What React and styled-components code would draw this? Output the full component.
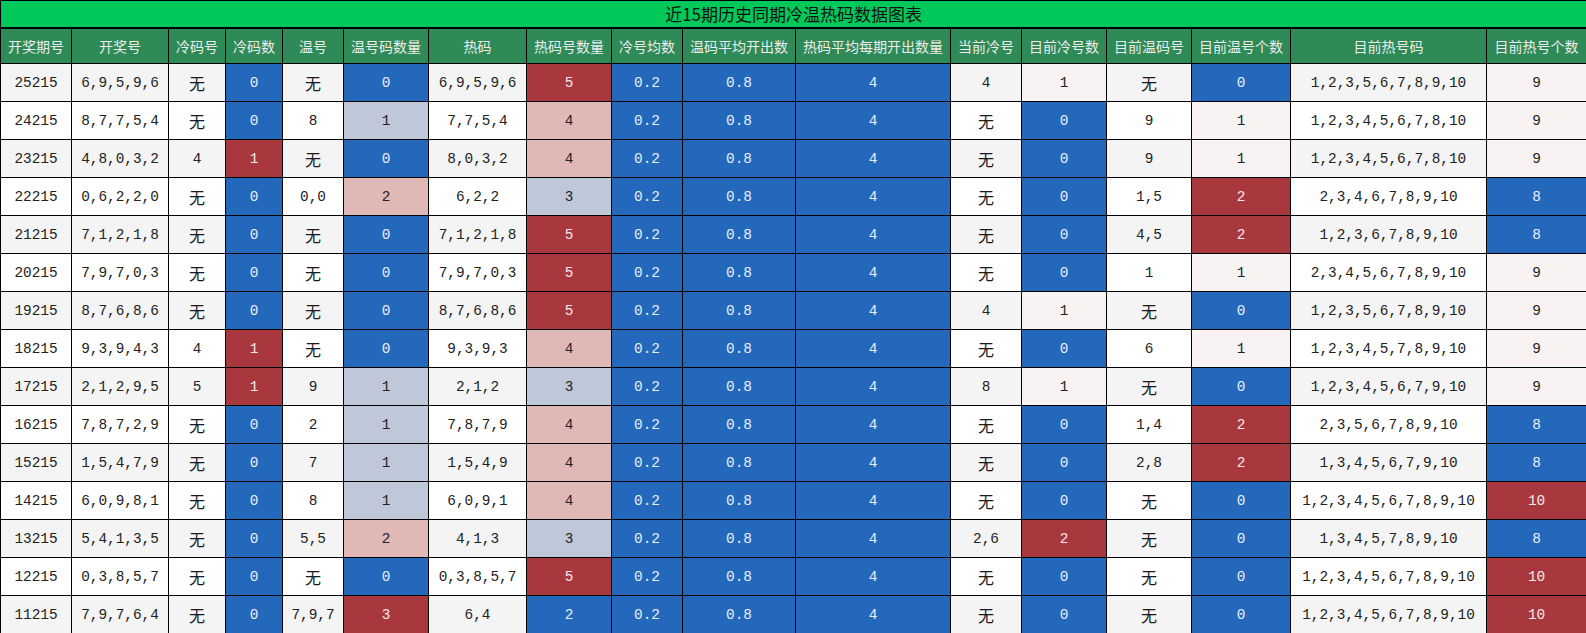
import React from "react";
import styled, { createGlobalStyle } from "styled-components";

const Global = createGlobalStyle`
  html, body { margin: 0; padding: 0; background: #ffffff; }
  body { font-family: "Noto Sans CJK SC", "Noto Sans", sans-serif; }
`;

const COLORS = {
  blue: { bg: "#2468bc", fg: "#e8eefa" },
  red: { bg: "#a8383e", fg: "#f6e8e8" },
  pink: { bg: "#e0b8b6", fg: "#222222" },
  slate: { bg: "#bfc8d8", fg: "#222222" },
  blush: { bg: "#f8f2f2", fg: "#222222" },
};

const Sheet = styled.table`
  width: 1586px;
  table-layout: fixed;
  border-collapse: collapse;
  border: 1px solid #000;
`;

const Col = styled.col`
  width: ${(p) => p.$w}px;
`;

const TitleCell = styled.th`
  height: 26px;
  padding: 0;
  background: #00c85a;
  color: #111111;
  font-family: "Noto Sans CJK SC", "Noto Sans", sans-serif;
  font-size: 17px;
  font-weight: 400;
  line-height: 24px;
  text-align: center;
  border: 1px solid #000;
  border-bottom-width: 2px;
`;

const HeadCell = styled.th`
  height: 34px;
  padding: 0;
  background: #2e8a57;
  color: #ececec;
  font-family: "Noto Sans CJK SC", "Noto Sans", sans-serif;
  font-size: 14px;
  font-weight: 400;
  text-align: center;
  white-space: nowrap;
  border: 1px solid #000;
`;

const Row = styled.tr`
  background: ${(p) => (p.$alt ? "#f4f4f4" : "#ffffff")};
`;

const Cell = styled.td`
  height: 37px;
  padding: 0;
  text-align: center;
  white-space: nowrap;
  font-family: "Liberation Mono", "Noto Sans CJK SC", monospace;
  font-size: 14.4px;
  line-height: 18px;
  border: 1px solid #000;
  background: ${(p) => (p.$tone ? COLORS[p.$tone].bg : "transparent")};
  color: ${(p) => (p.$tone ? COLORS[p.$tone].fg : "#222222")};
`;

const Nil = styled.span`
  display: inline-block;
  font-family: "Noto Sans CJK SC", sans-serif;
  font-size: 16px;
  line-height: 18px;
  vertical-align: -4px;
  color: #1a1a1a;
`;

const Value = ({ v }) => (v === "无" ? <Nil>无</Nil> : v);

const widths = [71, 97, 57, 57, 61, 85, 98, 85, 71, 113, 155, 71, 85, 85, 99, 196, 100];

const headers = [
  "开奖期号", "开奖号", "冷码号", "冷码数", "温号", "温号码数量", "热码", "热码号数量",
  "冷号均数", "温码平均开出数", "热码平均每期开出数量", "当前冷号", "目前冷号数",
  "目前温码号", "目前温号个数", "目前热号码", "目前热号个数",
];

const rows = [
  ["25215", "6,9,5,9,6", "无", "0", "blue", "无", "0", "blue", "6,9,5,9,6", "5", "red", "4", "1", "blush", "无", "0", "blue", "1,2,3,5,6,7,8,9,10", "9", "blush"],
  ["24215", "8,7,7,5,4", "无", "0", "blue", "8", "1", "slate", "7,7,5,4", "4", "pink", "无", "0", "blue", "9", "1", "blush", "1,2,3,4,5,6,7,8,10", "9", "blush"],
  ["23215", "4,8,0,3,2", "4", "1", "red", "无", "0", "blue", "8,0,3,2", "4", "pink", "无", "0", "blue", "9", "1", "blush", "1,2,3,4,5,6,7,8,10", "9", "blush"],
  ["22215", "0,6,2,2,0", "无", "0", "blue", "0,0", "2", "pink", "6,2,2", "3", "slate", "无", "0", "blue", "1,5", "2", "red", "2,3,4,6,7,8,9,10", "8", "blue"],
  ["21215", "7,1,2,1,8", "无", "0", "blue", "无", "0", "blue", "7,1,2,1,8", "5", "red", "无", "0", "blue", "4,5", "2", "red", "1,2,3,6,7,8,9,10", "8", "blue"],
  ["20215", "7,9,7,0,3", "无", "0", "blue", "无", "0", "blue", "7,9,7,0,3", "5", "red", "无", "0", "blue", "1", "1", "blush", "2,3,4,5,6,7,8,9,10", "9", "blush"],
  ["19215", "8,7,6,8,6", "无", "0", "blue", "无", "0", "blue", "8,7,6,8,6", "5", "red", "4", "1", "blush", "无", "0", "blue", "1,2,3,5,6,7,8,9,10", "9", "blush"],
  ["18215", "9,3,9,4,3", "4", "1", "red", "无", "0", "blue", "9,3,9,3", "4", "pink", "无", "0", "blue", "6", "1", "blush", "1,2,3,4,5,7,8,9,10", "9", "blush"],
  ["17215", "2,1,2,9,5", "5", "1", "red", "9", "1", "slate", "2,1,2", "3", "slate", "8", "1", "blush", "无", "0", "blue", "1,2,3,4,5,6,7,9,10", "9", "blush"],
  ["16215", "7,8,7,2,9", "无", "0", "blue", "2", "1", "slate", "7,8,7,9", "4", "pink", "无", "0", "blue", "1,4", "2", "red", "2,3,5,6,7,8,9,10", "8", "blue"],
  ["15215", "1,5,4,7,9", "无", "0", "blue", "7", "1", "slate", "1,5,4,9", "4", "pink", "无", "0", "blue", "2,8", "2", "red", "1,3,4,5,6,7,9,10", "8", "blue"],
  ["14215", "6,0,9,8,1", "无", "0", "blue", "8", "1", "slate", "6,0,9,1", "4", "pink", "无", "0", "blue", "无", "0", "blue", "1,2,3,4,5,6,7,8,9,10", "10", "red"],
  ["13215", "5,4,1,3,5", "无", "0", "blue", "5,5", "2", "pink", "4,1,3", "3", "slate", "2,6", "2", "red", "无", "0", "blue", "1,3,4,5,7,8,9,10", "8", "blue"],
  ["12215", "0,3,8,5,7", "无", "0", "blue", "无", "0", "blue", "0,3,8,5,7", "5", "red", "无", "0", "blue", "无", "0", "blue", "1,2,3,4,5,6,7,8,9,10", "10", "red"],
  ["11215", "7,9,7,6,4", "无", "0", "blue", "7,9,7", "3", "red", "6,4", "2", "blue", "无", "0", "blue", "无", "0", "blue", "1,2,3,4,5,6,7,8,9,10", "10", "red"],
];

export default function App() {
  return (
    <>
      <Global />
      <Sheet>
        <colgroup>
          {widths.map((w, i) => (
            <Col key={i} $w={w} />
          ))}
        </colgroup>
        <thead>
          <tr>
            <TitleCell colSpan={17}>近15期历史同期冷温热码数据图表</TitleCell>
          </tr>
          <tr>
            {headers.map((h) => (
              <HeadCell key={h}>{h}</HeadCell>
            ))}
          </tr>
        </thead>
        <tbody>
          {rows.map((r, i) => (
            <Row key={r[0]} $alt={i % 2 === 0}>
              <Cell>{r[0]}</Cell>
              <Cell>{r[1]}</Cell>
              <Cell><Value v={r[2]} /></Cell>
              <Cell $tone={r[4]}>{r[3]}</Cell>
              <Cell><Value v={r[5]} /></Cell>
              <Cell $tone={r[7]}>{r[6]}</Cell>
              <Cell>{r[8]}</Cell>
              <Cell $tone={r[10]}>{r[9]}</Cell>
              <Cell $tone="blue">0.2</Cell>
              <Cell $tone="blue">0.8</Cell>
              <Cell $tone="blue">4</Cell>
              <Cell><Value v={r[11]} /></Cell>
              <Cell $tone={r[13]}>{r[12]}</Cell>
              <Cell><Value v={r[14]} /></Cell>
              <Cell $tone={r[16]}>{r[15]}</Cell>
              <Cell>{r[17]}</Cell>
              <Cell $tone={r[19]}>{r[18]}</Cell>
            </Row>
          ))}
        </tbody>
      </Sheet>
    </>
  );
}
